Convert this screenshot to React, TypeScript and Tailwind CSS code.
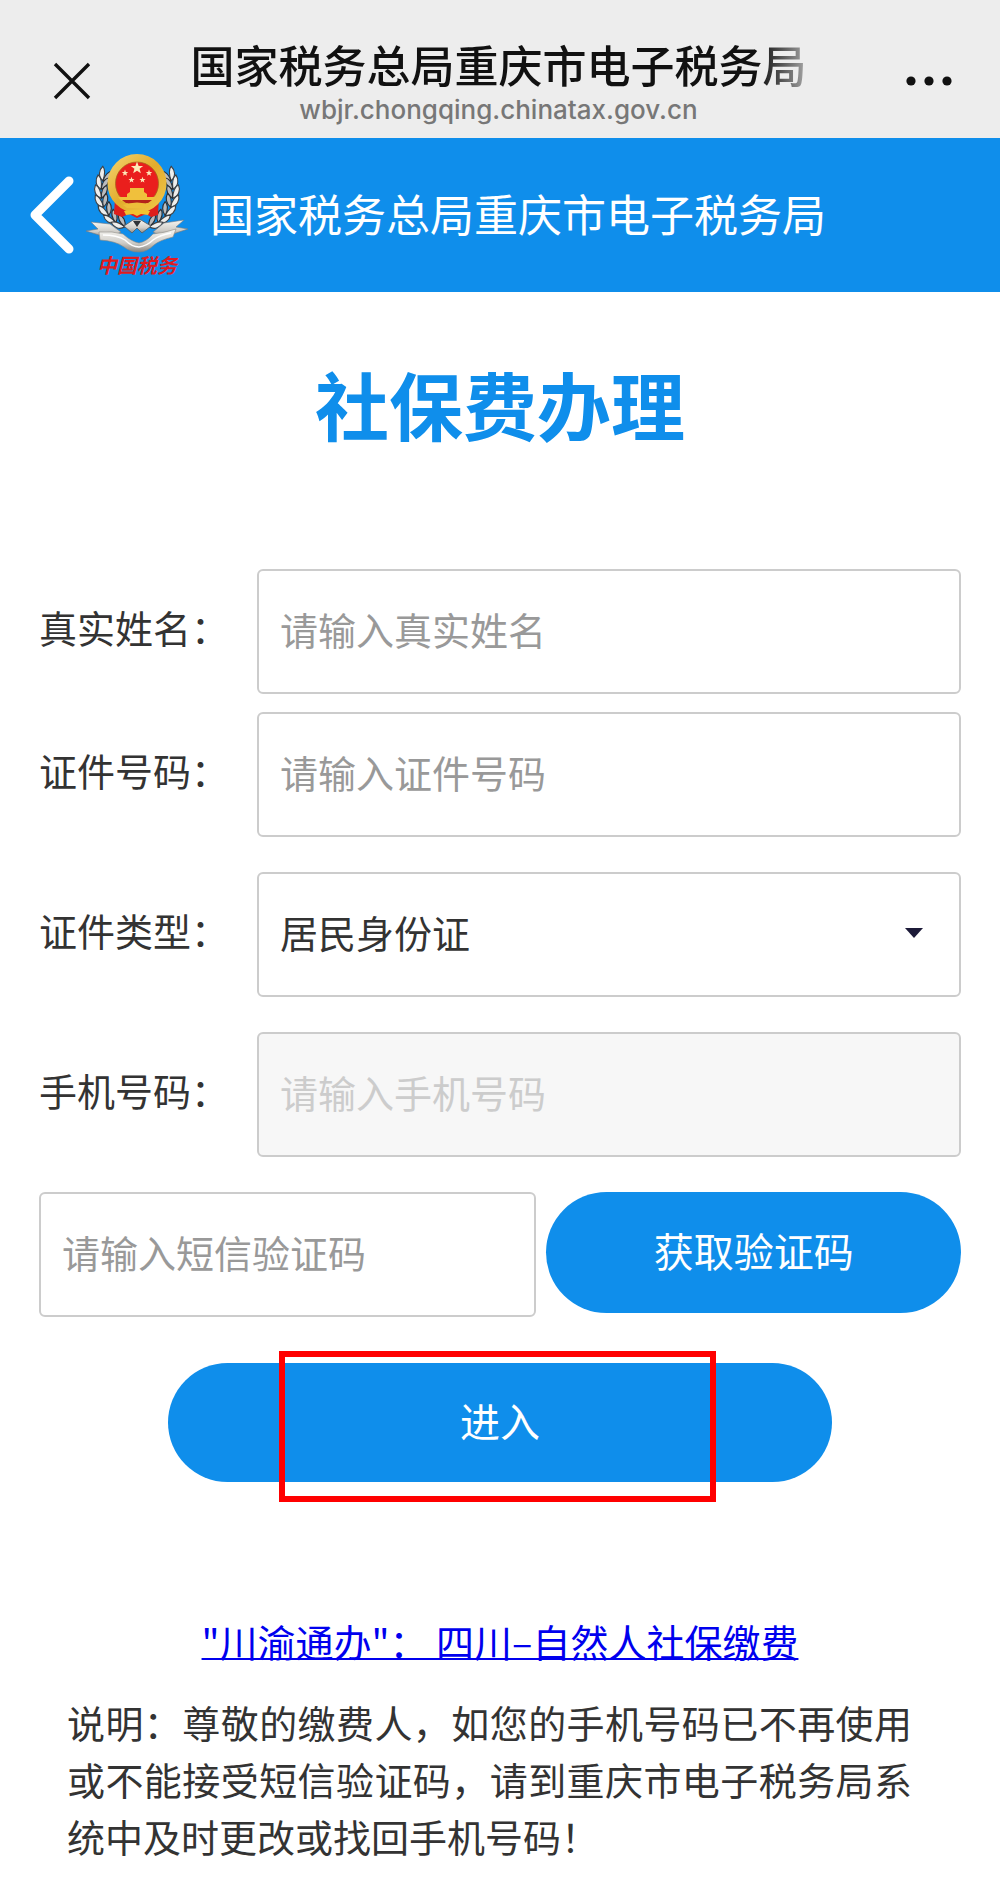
import React, { useState } from 'react';

interface FieldProps {
  id: string;
  label: string;
  children: React.ReactNode;
}

interface LeafProps {
  x: number;
  y: number;
  angle: number;
}

const BOX = 'h-[125px] w-full min-w-0 rounded-md border-2 border-[#ccc] px-[21px] pb-1.5 text-[38px] text-[#333]';

// Left half of the wheat wreath, mirrored for the right half
const LEAVES: LeafProps[] = [
  { x: 19, y: 21, angle: 20 },
  { x: 16, y: 29, angle: 8 },
  { x: 15, y: 38, angle: -4 },
  { x: 16, y: 47, angle: -14 },
  { x: 20, y: 56, angle: -26 },
  { x: 26, y: 64, angle: -38 },
  { x: 34, y: 69, angle: -52 },
];

const Leaf = ({ x, y, angle }: LeafProps) => (
  <g transform={`translate(${x} ${y}) rotate(${angle}) scale(1.25)`}>
    <path d="M0 5C-5 3-6-2-4-6C-1-4 0 0 0 5Z" fill="#eeeeec" stroke="#3c4045" strokeWidth="0.9" />
    <path d="M0 5C4 3 6-1 5-5C2-4 0 0 0 5Z" fill="#b9bbbd" stroke="#2c2f33" strokeWidth="0.9" />
  </g>
);

const Star = ({ x, y, r }: { x: number; y: number; r: number }) => (
  <path
    transform={`translate(${x} ${y}) scale(${r})`}
    d="M0-1L.25-.32L.95-.31L.4.13L.59.81L0 .42L-.59.81L-.4.13L-.95-.31L-.25-.32Z"
    fill="#fde9b8"
  />
);

const Emblem = () => (
  <svg viewBox="0 0 102 99" className="h-[99px] w-[102px]" aria-hidden="true">
    <defs>
      <linearGradient id="silver" x1="0" y1="0" x2="0" y2="1">
        <stop offset="0" stopColor="#f7f6f2" />
        <stop offset="0.6" stopColor="#cfcdc8" />
        <stop offset="1" stopColor="#8a8781" />
      </linearGradient>
      <linearGradient id="gold" x1="0" y1="0" x2="1" y2="1">
        <stop offset="0" stopColor="#f2d069" />
        <stop offset="0.5" stopColor="#e2ac2c" />
        <stop offset="1" stopColor="#f0c548" />
      </linearGradient>
    </defs>

    {LEAVES.map(l => <Leaf key={l.y} {...l} />)}
    <g transform="translate(102 0) scale(-1 1)">
      {LEAVES.map(l => <Leaf key={l.y} {...l} />)}
    </g>

    {/* Red drape under the badge */}
    <path d="M29 44H73L72 61L65 63L60 60L51 64L43 60L36 63L28 60Z" fill="#dd1f1c" />
    <circle cx="51" cy="29.500" r="25.500" fill="#ea1f1d" stroke="url(#gold)" strokeWidth="8" />
    <circle cx="51" cy="29.500" r="21.500" fill="none" stroke="#a8641c" strokeWidth="0.8" />
    <Star x={51} y={14} r={6.5} />
    <Star x={39} y={19} r={3.4} />
    <Star x={63} y={19} r={3.4} />
    <Star x={45.5} y={26} r={3.2} />
    <Star x={56.5} y={26} r={3.2} />

    {/* Gate tower */}
    <path d="M44 34H58V38L61 40V43H70L67 47H35L32 43H41V40L44 38Z" fill="#f0c03c" />
    <path d="M36 46H66L62 49H40Z" fill="#b5221a" />
    <path d="M37 51Q51 46 65 51L61 54H41Z" fill="#edbd3a" />
    <path d="M38 57L47 56H55L64 57L62 61L55 60L51 62L47 60L40 61Z" fill="#f1c32f" />

    {/* Silver banner */}
    <path d="M38 72L47 66H55L65 72L56 79L51 74L46 79Z" fill="url(#silver)" stroke="#55585c" strokeWidth="0.8" />
    <path d="M47 67H55L51 73Z" fill="#2f3337" />
    <path d="M0 77L12 75L5 68L24 70L35 78L24 84L13 81Z" fill="url(#silver)" stroke="#77797c" strokeWidth="0.6" />
    <path d="M102 75L90 73L98 66L78 69L67 78L77 83L87 80Z" fill="url(#silver)" stroke="#77797c" strokeWidth="0.6" />
    <path d="M13 78Q27 77 37 80Q46 88 53 89Q60 88 67 80Q78 79 90 75L87 83Q74 86 68 91Q61 98 53 98Q44 98 38 93Q30 87 14 86Z" fill="url(#silver)" stroke="#8b8882" strokeWidth="0.6" />
    <path d="M17 81Q31 81 39 86Q46 93 53 93Q61 92 67 86Q74 81 85 79" fill="none" stroke="#fff" strokeWidth="1.4" />
  </svg>
);

const Field: React.FC<FieldProps> = ({ id, label, children }) => (
  <div className="flex items-center">
    <label htmlFor={id} className="w-[218px] shrink-0 pb-2.5 text-[38px] whitespace-nowrap text-[#333]">
      {label}
    </label>
    <div className="relative min-w-0 flex-1">{children}</div>
  </div>
);

const App: React.FC = () => {
  const [idType, setIdType] = useState('居民身份证');

  return (
    <div className="min-h-screen bg-white font-['Noto_Sans_CJK_SC',sans-serif]">
      {/* Browser bar */}
      <header className="flex h-[138px] items-center justify-between bg-[#ededed] pt-6 pr-12 pl-[53px]">
        <button type="button" aria-label="关闭">
          <svg viewBox="0 0 38 38" className="h-[38px] w-[38px]" fill="none" stroke="#111" strokeWidth="3.4">
            <path d="M2 2L36 36M36 2L2 36" />
          </svg>
        </button>
        <div className="flex flex-col items-center gap-1.5">
          <div className="bg-linear-to-r from-[#111] from-92% to-[#aaa] bg-clip-text text-[44px] leading-[52px] font-medium whitespace-nowrap text-transparent">
            国家税务总局重庆市电子税务局
          </div>
          <div className="font-[Inter,sans-serif] text-[26px] leading-7 font-medium text-[#777]">wbjr.chongqing.chinatax.gov.cn</div>
        </div>
        <button type="button" aria-label="更多">
          <svg viewBox="0 0 46 10" className="h-[10px] w-[46px]" fill="#111">
            <circle cx="5" cy="5" r="4.600" />
            <circle cx="23" cy="5" r="4.600" />
            <circle cx="41" cy="5" r="4.600" />
          </svg>
        </button>
      </header>

      {/* Site bar */}
      <div className="flex h-[154px] items-center bg-[#0f8eeb] pl-7 text-white">
        <button type="button" aria-label="返回">
          <svg viewBox="0 0 46 80" className="h-20 w-[46px]" fill="none" stroke="#fff" strokeWidth="9" strokeLinecap="round" strokeLinejoin="round">
            <path d="M41 6L7 40L41 74" />
          </svg>
        </button>
        <div className="ml-3 flex flex-col items-center">
          <Emblem />
          <span className="text-[20px] leading-6 font-bold text-[#e01a20] italic">中国税务</span>
        </div>
        <span className="ml-[22px] pb-1 text-[44px] whitespace-nowrap">国家税务总局重庆市电子税务局</span>
      </div>

      <main className="px-[39px]">
        <h1 className="pt-[57px] text-center text-[74px] leading-[108px] font-bold text-[#0f8eeb]">社保费办理</h1>

        <form className="mt-[112px]" onSubmit={e => e.preventDefault()}>
          <div className="flex flex-col gap-[35px]">
            <div className="flex flex-col gap-[18px]">
              <Field id="name" label="真实姓名：">
                <input id="name" type="text" placeholder="请输入真实姓名" className={`${BOX} placeholder:text-[#999]`} />
              </Field>
              <Field id="idNumber" label="证件号码：">
                <input id="idNumber" type="text" placeholder="请输入证件号码" className={`${BOX} placeholder:text-[#999]`} />
              </Field>
            </div>

            <Field id="idType" label="证件类型：">
              <select
                id="idType"
                value={idType}
                onChange={e => setIdType(e.target.value)}
                className={`${BOX} appearance-none bg-white`}
              >
                <option>居民身份证</option>
                <option>护照</option>
              </select>
              <svg viewBox="0 0 18 10" className="pointer-events-none absolute top-14 right-[38px] h-[10px] w-[18px]" fill="#1c1a38">
                <path d="M0 0H18L9 10Z" />
              </svg>
            </Field>

            <Field id="phone" label="手机号码：">
              <input id="phone" type="tel" disabled placeholder="请输入手机号码" className={`${BOX} bg-[#f7f7f7] placeholder:text-[#ccc]`} />
            </Field>

            <div className="flex gap-[10px]">
              <div className="min-w-0 flex-6">
                <input type="text" aria-label="短信验证码" placeholder="请输入短信验证码" className={`${BOX} placeholder:text-[#999]`} />
              </div>
              <button type="button" className="h-[121px] flex-5 rounded-full bg-[#0f8eeb] pb-1.5 text-[40px] text-white">
                获取验证码
              </button>
            </div>
          </div>

          <div className="relative mx-auto mt-[46px] w-[72%]">
            <button type="submit" className="h-[119px] w-full rounded-full bg-[#0f8eeb] pb-1.5 text-[40px] text-white">
              进入
            </button>
            {/* Highlight frame */}
            <div className="pointer-events-none absolute -top-3 right-[17.5%] -bottom-5 left-1/6 border-6 border-[#f00]" />
          </div>
        </form>

        <div className="mt-[130px] text-center text-[38px] leading-[57px]">
          <a href="#sichuan" className="text-[#0000ee] underline decoration-2">"川渝通办"： 四川–自然人社保缴费</a>
        </div>
        <p className="mt-6 mb-6 pr-[49px] pl-7 text-justify text-[38px] leading-[57px] text-[#333]">
          说明：尊敬的缴费人，如您的手机号码已不再使用或不能接受短信验证码，请到重庆市电子税务局系统中及时更改或找回手机号码！
        </p>
      </main>
    </div>
  );
};

export default App;
